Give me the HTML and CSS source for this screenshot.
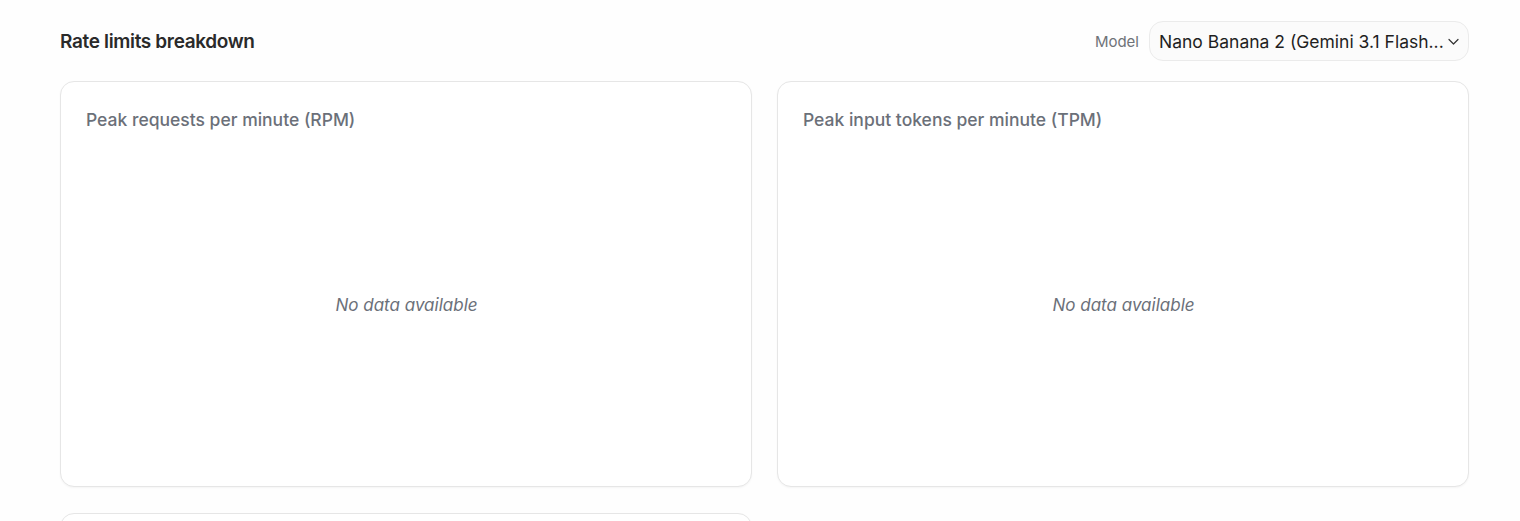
FILE: index.html
```html
<!DOCTYPE html>
<html>
<head>
<meta charset="utf-8">
<link rel="stylesheet" href="styles.css">
</head>
<body>
<div class="page">
  <div class="header">
    <h2 class="title">Rate limits breakdown</h2>
    <div class="model">
      <span class="model-label">Model</span>
      <button class="select">
        <span class="select-text">Nano Banana 2 (Gemini 3.1 Flash...</span>
        <svg class="chev" width="13" height="13" viewBox="0 0 13 13"><path d="M2 4.5 L6.5 9 L11 4.5" fill="none" stroke="#333" stroke-width="1.2" stroke-linecap="round" stroke-linejoin="round"/></svg>
      </button>
    </div>
  </div>
  <div class="grid">
    <div class="card">
      <div class="card-title">Peak requests per minute (RPM)</div>
      <div class="empty">No data available</div>
    </div>
    <div class="card">
      <div class="card-title">Peak input tokens per minute (TPM)</div>
      <div class="empty">No data available</div>
    </div>
    <div class="card card-next"></div>
  </div>
</div>
</body>
</html>
```
FILE: styles.css
```css
* { box-sizing: border-box; }
html, body { margin: 0; padding: 0; background: #fefefe; }
body { font-family: Inter, "Noto Sans", sans-serif; color: #1f1f1f; }
.page { padding: 21px 51px 0 60px; }
.header { display: flex; align-items: center; justify-content: space-between; height: 40px; margin-bottom: 20px; }
.title { margin: 0; font-size: 19px; font-weight: 600; color: #2a2a2a; letter-spacing: -0.35px; }
.model { display: flex; align-items: center; gap: 10px; }
.model-label { font-size: 15px; color: #6f7378; }
.select { display: flex; align-items: center; justify-content: space-between; height: 40px; width: 320px; padding: 0 8px 0 9px; border: 1px solid #ebebeb; border-radius: 14px; background: #fbfbfb; font-family: inherit; cursor: pointer; }
.select-text { font-size: 17.5px; color: #1f1f1f; white-space: nowrap; }
.chev { flex: none; }
.grid { display: grid; grid-template-columns: 1fr 1fr; column-gap: 25px; row-gap: 26px; }
.card { background: #fff; border: 1px solid #e6e6e6; border-radius: 14px; box-shadow: 0 1px 2px rgba(0,0,0,0.04); height: 406px; padding: 26px 24px 26px 25px; display: flex; flex-direction: column; }
.card-title { font-size: 17.5px; font-weight: 500; color: #6b7079; line-height: 24px; }
.empty { flex: 1; display: flex; align-items: center; justify-content: center; font-style: italic; font-size: 17px; color: #6b7079; padding-top: 17px; }
```
